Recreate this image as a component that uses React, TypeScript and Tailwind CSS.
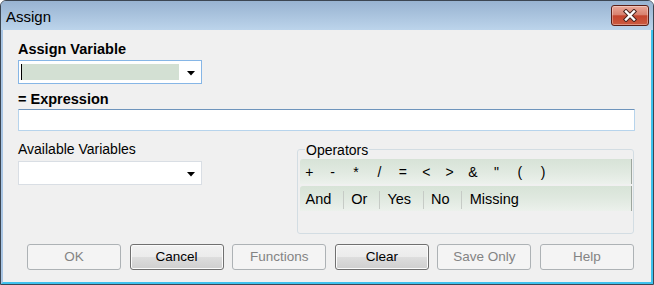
import React from "react";

const symbols = ["+", "-", "*", "/", "=", "<", ">", "&", '"', "(", ")"];
const words = ["And", "Or", "Yes", "No", "Missing"];

function Btn({ label, enabled }: { label: string; enabled?: boolean }) {
  return enabled ? (
    <div className="w-[94px] h-[26px] rounded-[3px] border border-[#707070] bg-[linear-gradient(to_bottom,#f2f2f2_0%,#ebebeb_50%,#dddddd_51%,#cfcfcf_100%)] shadow-[inset_0_0_0_1px_#fbfbfb] flex items-center justify-center text-[13.5px] text-black">
      {label}
    </div>
  ) : (
    <div className="w-[94px] h-[26px] rounded-[3px] border border-[#adb2b5] bg-[#f4f4f4] flex items-center justify-center text-[13.5px] text-[#838383]">
      {label}
    </div>
  );
}

function Arrow() {
  return (
    <svg width="8" height="5" viewBox="0 0 8 5" className="ml-auto mr-[6px] mt-[3px]">
      <polygon points="0,0 8,0 4,4.5" fill="#000" />
    </svg>
  );
}

export default function App() {
  return (
    <div className="w-[654px] h-[285px] flex flex-col border border-[#3c4652] rounded-t-[6px] overflow-hidden bg-[#b4cce6] font-['Liberation_Sans',Arial,sans-serif] text-black">
      {/* Title bar */}
      <div className="h-[29px] shrink-0 flex items-center justify-between pl-[5px] pr-[4px] bg-linear-to-b from-[#98b3d1] to-[#bcd4eb]">
        <span className="text-[15px] leading-[17px] pt-[2px]">Assign</span>
        <div className="w-[38px] h-[21px] rounded-[3px] border border-[#5a1e16] bg-[linear-gradient(to_bottom,#eaa898_0%,#d88270_45%,#c4452e_52%,#cc5a40_100%)] shadow-[inset_0_0_0_1px_rgba(255,255,255,0.35)] flex items-center justify-center">
          <svg width="16" height="13" viewBox="0 0 16 13">
            <path d="M4 2.5 L12 10.5 M12 2.5 L4 10.5" stroke="#4a2620" strokeWidth="4.4" strokeLinecap="square" />
            <path d="M4 2.5 L12 10.5 M12 2.5 L4 10.5" stroke="#ffffff" strokeWidth="2.4" strokeLinecap="square" />
          </svg>
        </div>
      </div>

      {/* Body */}
      <div className="flex-1 flex flex-col bg-[#f0f0f0] border-l-2 border-l-[#a9c5e3] border-r-2 border-r-[#3ec2ee] border-b-2 border-b-[#3ec2ee] pl-[15px] pt-[11px]">
        <div className="text-[14.5px] font-bold leading-[16px] h-[16px]">Assign Variable</div>
        <div className="mt-[3px] w-[184px] h-[24px] border border-[#86b6e6] bg-white flex items-center">
          <div className="ml-[2px] w-[158px] h-[16px] bg-[#d3e0d3] border-l border-l-black" />
          <Arrow />
        </div>

        <div className="mt-[7px] text-[14.5px] font-bold leading-[17px] h-[17px]">= Expression</div>
        <div className="mt-[1px] w-[617px] h-[22px] bg-white border border-[#b7d4ec] border-t-[#6e94bc] rounded-[1px]" />

        <div className="mt-[9px] flex">
          <div className="w-[184px] flex flex-col">
            <div className="text-[14px] leading-[16px] h-[17px] pt-[1px]">Available Variables</div>
            <div className="mt-[4px] w-[184px] h-[24px] border border-[#d9dee4] bg-white flex items-center">
              <Arrow />
            </div>
          </div>

          <div className="ml-[95px] mt-[9px] w-[337px] h-[85px] border border-[#d3dde3] rounded-[3px] relative pl-[2px] pt-[9px] flex flex-col gap-[2px]">
            <span className="absolute left-[7px] top-[-8px] px-[1px] bg-[#f0f0f0] text-[14px] leading-[16px]">Operators</span>
            <div className="w-[332px] h-[25px] rounded-tl-[3px] bg-linear-to-b from-[#d7e3d7] via-[#e0e9e0] to-[#ecf1ec] border-r border-r-[#9ea69e] flex items-center pl-[4.3px] gap-[13.4px] text-[14px]">
              {symbols.map((s, i) => (
                <span key={i} className="w-[10px] text-center leading-[16px]">
                  {s}
                </span>
              ))}
            </div>
            <div className="w-[332px] h-[25px] rounded-tl-[3px] bg-linear-to-b from-[#d7e3d7] via-[#e0e9e0] to-[#ecf1ec] border-r border-r-[#9ea69e] flex items-center pl-[5.5px] pt-[2px] text-[14.5px]">
              {words.map((w, i) => (
                <React.Fragment key={w}>
                  <span className="leading-[17px]">{w}</span>
                  {i < words.length - 1 && (
                    <span className="ml-[11.5px] mr-[7.5px] w-px h-[18px] bg-[#c6cbc6]" />
                  )}
                </React.Fragment>
              ))}
            </div>
          </div>
        </div>

        <div className="mt-[10px] ml-[9px] flex gap-[8.6px]">
          <Btn label="OK" />
          <Btn label="Cancel" enabled />
          <Btn label="Functions" />
          <Btn label="Clear" enabled />
          <Btn label="Save Only" />
          <Btn label="Help" />
        </div>
      </div>
    </div>
  );
}
